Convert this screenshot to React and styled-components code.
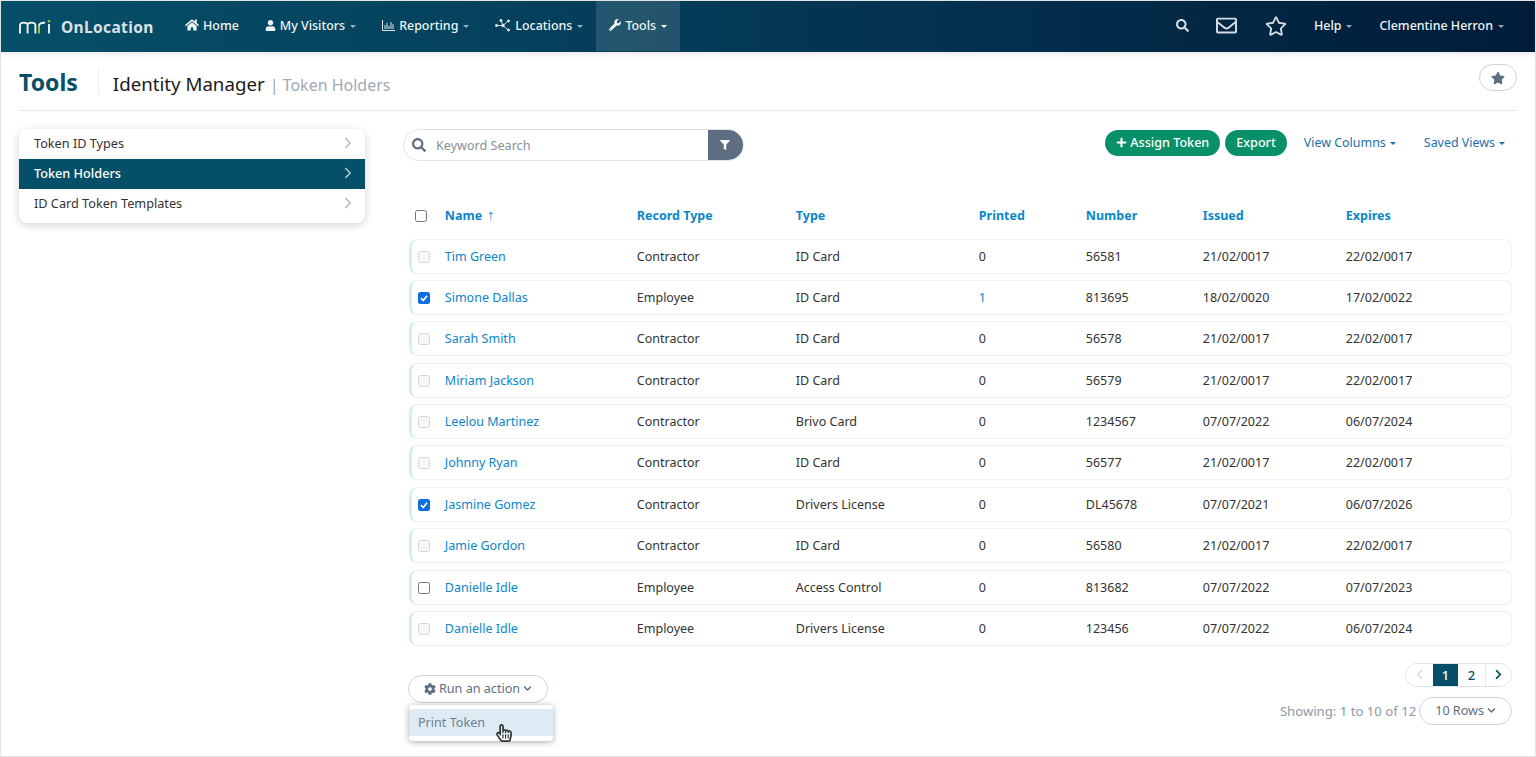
import React from 'react';
import styled, { createGlobalStyle } from 'styled-components';
import { FaHome, FaUser, FaWrench, FaSearch, FaRegEnvelope, FaRegStar, FaStar, FaPlus, FaFilter, FaCog, FaChevronDown, FaChevronLeft, FaChevronRight, FaRegHandPointer } from 'react-icons/fa';
import { LuChevronRight } from 'react-icons/lu';

const Global = createGlobalStyle`
  html, body { margin: 0; padding: 0; background: #fff; }
  * { box-sizing: border-box; }
  body { font-family: "Noto Sans", "Open Sans", sans-serif; color: #333; font-size: 13px; }
`;

const Frame = styled.div`
  width: 1536px; height: 757px; border: 1px solid #e2e4e6; overflow: hidden; display: flex; flex-direction: column; background: #fff;
`;
const Nav = styled.nav`
  height: 51px; flex: none; display: flex; align-items: stretch; color: #fff;
  background: linear-gradient(90deg, #064f68 0%, #04405c 35%, #032c4a 70%, #001c38 100%);
  box-shadow: 0 2px 6px rgba(0,0,0,.1);
`;
const Brand = styled.div`
  width: 171px; padding-left: 18px; display: flex; align-items: center; gap: 9px; flex: none;
`;
const BrandName = styled.span`
  font-size: 15.5px; font-weight: 700; color: #d8e2e8; letter-spacing: .35px;
`;
const NavItem = styled.div`
  display: flex; align-items: center; gap: 4px; height: 50px; padding: 0 13px 2px; font-size: 12.45px; font-weight: 500;
  color: #eef3f5; white-space: nowrap;
  background: ${p => (p.$active ? 'rgba(255,255,255,.13)' : 'transparent')};
  svg { flex: none; }
`;
const Caret = styled.span`
  display: inline-block; width: 0; height: 0; vertical-align: middle; margin-left: ${p => p.$ml ?? 5}px;
  border-left: ${p => p.$half ?? 3}px solid transparent; border-right: ${p => p.$half ?? 3}px solid transparent;
  border-top: 3px solid ${p => p.$color || 'rgba(255,255,255,.6)'};
`;
const NavSpacer = styled.div`flex: 1;`;
const NavIcon = styled.div`
  display: flex; align-items: center; justify-content: center; color: #d5dce1; margin-right: ${p => p.$mr}px;
`;
const NavRight = styled.div`
  display: flex; align-items: center; padding: 0 31px 2px 0;
`;
const NavText = styled.span`
  font-size: 12.45px; font-weight: 500; color: #f0f4f6; white-space: nowrap; margin-left: ${p => p.$ml || 0}px;
`;

const Header = styled.header`
  margin: 0 18px; height: 59px; flex: none; border-bottom: 1px solid #e8eaec; display: flex; align-items: center; position: relative;
`;
const Title = styled.h1`
  margin: 0; font-size: 23px; font-weight: 700; color: #064f68; padding: 1px 20px 0 0; border-right: 1px solid #eceef0; line-height: 26px; height: 26px; display: flex; align-items: center;
`;
const Subtitle = styled.span`
  margin-left: 14px; font-size: 18.7px; color: #1a1a1a; position: relative; top: 2px;
`;
const Crumb = styled.span`
  margin-left: 5px; font-size: 16px; color: #a2a8b4; position: relative; top: 4px;
`;
const FavButton = styled.button`
  position: absolute; right: 0; top: 12px; width: 38px; height: 27px; border-radius: 14px; border: 1px solid #c9d4da; background: #fff;
  display: flex; align-items: center; justify-content: center; color: #5d6e82; padding: 0;
`;

const Body = styled.div`
  flex: 1; display: flex; padding: 18px 23px 0 18px; gap: 38px; min-height: 0;
`;
const Side = styled.aside`
  width: 346px; flex: none; height: 94px; background: #fff; border-radius: 8px; box-shadow: 0 2px 8px rgba(0,0,0,.18); overflow: hidden; display: flex; flex-direction: column; padding-bottom: 5px;
`;
const SideItem = styled.div`
  height: 30px; flex: none; display: flex; align-items: center; justify-content: space-between; padding: 0 8px 2px 15px; font-size: 12.7px;
  color: ${p => (p.$active ? '#fff' : '#333')}; font-weight: ${p => (p.$active ? 500 : 400)};
  background: ${p => (p.$active ? '#064f68' : 'transparent')};
  svg { color: ${p => (p.$active ? '#b9c9d1' : '#b5b9bd')}; }
`;
const Main = styled.main`
  flex: 1; min-width: 0; display: flex; flex-direction: column;
`;
const Toolbar = styled.div`
  display: flex; align-items: flex-start; justify-content: space-between; height: 32px; flex: none; padding-right: 7px;
`;
const Search = styled.div`
  width: 341px; height: 32px; display: flex; align-items: stretch; border: 1px solid #dfe5e7; border-radius: 16px; overflow: hidden; background: #fff;
`;
const SearchIcon = styled.div`
  width: 32px; flex: none; display: flex; align-items: center; justify-content: flex-start; padding-left: 8px; color: #5f6f82;
`;
const SearchInput = styled.div`
  flex: 1; display: flex; align-items: center; color: #8a8f94; font-size: 12.6px;
`;
const FilterBtn = styled.div`
  width: 36px; flex: none; background: #5d6e82; color: #fff; display: flex; align-items: center; justify-content: center; margin: -1px -1px -1px 0; padding-right: 2px;
`;
const Actions = styled.div`display: flex; align-items: center; margin-top: 1px;`;
const GreenBtn = styled.button`
  height: 26px; border: 0; border-radius: 13px; background: #089069; color: #fff; font-family: inherit; font-size: 12.6px; font-weight: 500; padding: 0 11px 1px; margin-right: 5px; display: flex; align-items: center; gap: 3px; white-space: nowrap;
`;
const LinkBtn = styled.span`
  color: #1f6ea8; font-size: 12.45px; white-space: nowrap; margin-left: ${p => p.$ml}px; padding-bottom: 2px;
`;

const cols = '36px 192px 159px 183px 107px 117px 143px 1fr';
const HeadRow = styled.div`
  display: grid; grid-template-columns: ${cols}; align-items: center; height: 30px; margin: 39px 0 0 5.8px; flex: none;
`;
const HeadCell = styled.div`
  font-size: 12.5px; font-weight: 700; color: #0b86c9; white-space: nowrap;
`;
const SortArrow = styled.span`
  font-weight: 400; margin-left: 5px; font-size: 15px; line-height: 12px;
`;
const Box = styled.span`
  display: inline-block; width: 12px; height: 12px; border-radius: 2.5px; flex: none;
  margin: ${p => (p.$head ? '2px 0 0 6.2px' : '1px 0 0 6px')};
  border: 1px solid ${p => (p.$dim ? '#d9d9d9' : '#767676')};
  background: ${p => (p.$dim ? '#f7f7f7' : '#fff')};
`;
const CheckedBox = styled.span`
  width: 12px; height: 12px; border-radius: 2.5px; background: #0b6fe0; margin: 1px 0 0 6px; display: inline-flex; align-items: center; justify-content: center;
`;
const Rows = styled.div`
  display: flex; flex-direction: column; gap: 6.36px; margin: 8.7px 0 0 6px;
`;
const Row = styled.div`
  display: grid; grid-template-columns: ${cols}; align-items: center; height: 35px; border: 1px solid #eef0f1; border-left: 3px solid #d6eef5; border-radius: 8px;
  font-size: 12.5px; color: #333; background: #fff;
`;
const Cell = styled.span`margin-left: -3.2px; white-space: nowrap; color: ${p => p.$link ? '#0b86c9' : '#333'};`;
const Footer = styled.div`
  display: flex; justify-content: space-between; margin-top: 17px; position: relative; padding-left: 5px;
`;
const ActionWrap = styled.div`position: relative; padding-top: 12px;`;
const PillBtn = styled.button`
  height: 28px; border: 1px solid #c9d4da; border-radius: 14px; background: #fff; color: #5d6e82; font-family: inherit; font-size: 12.6px; display: flex; align-items: center; gap: 3px; padding: 0 15px; white-space: nowrap;
`;
const Menu = styled.div`
  position: absolute; left: 1px; top: 42px; width: 144px; height: 36px; background: #fff; border-radius: 4px; box-shadow: 0 1px 6px rgba(0,0,0,.35); padding: 4px 0;
`;
const MenuItem = styled.div`
  height: 27px; background: #dcebf4; color: #6f8090; font-size: 12.6px; display: flex; align-items: center; padding-left: 9px;
`;
const Pointer = styled.div`
  position: absolute; left: 87px; top: 61px; color: #333;
`;
const FooterRight = styled.div`display: flex; flex-direction: column; align-items: flex-end;`;
const Pager = styled.div`
  display: flex; height: 24px; border: 1px solid #dfe4e6; border-radius: 12px; overflow: hidden; background: #fff;
`;
const PageCell = styled.div`
  width: ${p => p.$w}px; display: flex; align-items: center; justify-content: center; font-size: 13px; font-weight: 500;
  color: ${p => (p.$active ? '#fff' : p.$off ? '#d5e0e4' : '#064f68')};
  background: ${p => (p.$active ? '#064f68' : '#fff')};
  border-left: ${p => (p.$sep ? '1px solid #e4e8ea' : '0')};
`;
const ShowRow = styled.div`display: flex; align-items: center; margin-top: 10px;`;
const Showing = styled.span`color: #8a9aa8; font-size: 13.15px; margin-right: 3px;`;

const data = [
  ['Tim Green', 'Contractor', 'ID Card', '0', '56581', '21/02/0017', '22/02/0017', 'dim'],
  ['Simone Dallas', 'Employee', 'ID Card', '1', '813695', '18/02/0020', '17/02/0022', 'on'],
  ['Sarah Smith', 'Contractor', 'ID Card', '0', '56578', '21/02/0017', '22/02/0017', 'dim'],
  ['Miriam Jackson', 'Contractor', 'ID Card', '0', '56579', '21/02/0017', '22/02/0017', 'dim'],
  ['Leelou Martinez', 'Contractor', 'Brivo Card', '0', '1234567', '07/07/2022', '06/07/2024', 'dim'],
  ['Johnny Ryan', 'Contractor', 'ID Card', '0', '56577', '21/02/0017', '22/02/0017', 'dim'],
  ['Jasmine Gomez', 'Contractor', 'Drivers License', '0', 'DL45678', '07/07/2021', '06/07/2026', 'on'],
  ['Jamie Gordon', 'Contractor', 'ID Card', '0', '56580', '21/02/0017', '22/02/0017', 'dim'],
  ['Danielle Idle', 'Employee', 'Access Control', '0', '813682', '07/07/2022', '07/07/2023', 'off'],
  ['Danielle Idle', 'Employee', 'Drivers License', '0', '123456', '07/07/2022', '06/07/2024', 'dim'],
];

const Logo = () => (
  <svg width="33" height="14" viewBox="0 0 33 14" fill="none" strokeWidth="1.9">
    <path d="M1 13.5V5.5C1 1.6 8.6 1.6 8.6 5.5V13.5M8.6 5.5C8.6 1.6 16.4 1.6 16.4 5.5V13.5" stroke="#eef3f5" />
    <path d="M20 13.5V6" stroke="#a9c93a" />
    <path d="M20 6C20 3.5 22.5 2.6 26 2.8" stroke="#eef3f5" />
    <path d="M30 13.5V4" stroke="#eef3f5" />
    <circle cx="30" cy="1.2" r="1.2" fill="#a9c93a" />
  </svg>
);
const ChartIcon = () => (
  <svg width="13" height="11" viewBox="0 0 13 11" fill="none" stroke="#dfe6ea" strokeWidth="1">
    <path d="M.5 0V10.5H13" />
    <path d="M3 9V5M5 9V3M7 9V6M9 9V2M11 9V4" />
  </svg>
);
const NodeIcon = () => (
  <svg width="16" height="13" viewBox="0 0 16 13" fill="#e5ebee" stroke="#e5ebee" strokeWidth=".9">
    <path d="M2 6.5 8 6.5M6 1.5 8 6.5 13 2M8 6.5 13 11" fill="none" />
    <circle cx="1.5" cy="6.5" r="1.1" /><circle cx="6" cy="1.5" r="1.1" /><circle cx="8" cy="6.5" r="1.3" /><circle cx="13.5" cy="2" r="1" /><circle cx="13.5" cy="11" r="1" />
  </svg>
);
const Check = () => (
  <svg width="10" height="10" viewBox="0 0 10 10" fill="none" stroke="#fff" strokeWidth="1.8"><path d="M2 5.2 4.2 7.5 8 2.7" /></svg>
);

export default function App() {
  return (
    <Frame>
      <Global />
      <Nav>
        <Brand><Logo /><BrandName>OnLocation</BrandName></Brand>
        <NavItem><FaHome size={14} /><span>Home</span></NavItem>
        <NavItem><FaUser size={11} /><span>My Visitors<Caret /></span></NavItem>
        <NavItem><ChartIcon /><span>Reporting<Caret /></span></NavItem>
        <NavItem><NodeIcon /><span>Locations<Caret /></span></NavItem>
        <NavItem $active><FaWrench size={12} /><span>Tools<Caret $color="#fff" /></span></NavItem>
        <NavSpacer />
        <NavRight>
          <NavIcon $mr={27}><FaSearch size={13} /></NavIcon>
          <NavIcon $mr={28}><FaRegEnvelope size={21} /></NavIcon>
          <NavIcon $mr={27}><FaRegStar size={22} /></NavIcon>
          <NavText>Help<Caret /></NavText>
          <NavText $ml={27}>Clementine Herron<Caret /></NavText>
        </NavRight>
      </Nav>
      <Header>
        <Title>Tools</Title>
        <Subtitle>Identity Manager</Subtitle>
        <Crumb>| Token Holders</Crumb>
        <FavButton><FaStar size={14} /></FavButton>
      </Header>
      <Body>
        <Side>
          <SideItem>Token ID Types<LuChevronRight size={18} /></SideItem>
          <SideItem $active>Token Holders<LuChevronRight size={18} /></SideItem>
          <SideItem>ID Card Token Templates<LuChevronRight size={18} /></SideItem>
        </Side>
        <Main>
          <Toolbar>
            <Search>
              <SearchIcon><FaSearch size={14} /></SearchIcon>
              <SearchInput>Keyword Search</SearchInput>
              <FilterBtn><FaFilter size={10} /></FilterBtn>
            </Search>
            <Actions>
              <GreenBtn><FaPlus size={11} />Assign Token</GreenBtn>
              <GreenBtn>Export</GreenBtn>
              <LinkBtn $ml={12}>View Columns<Caret $ml={4} $half={3.5} $color="#1f6ea8" /></LinkBtn>
              <LinkBtn $ml={28}>Saved Views<Caret $ml={4} $half={3.5} $color="#1f6ea8" /></LinkBtn>
            </Actions>
          </Toolbar>
          <HeadRow>
            <Box $head />
            <HeadCell>Name<SortArrow>↑</SortArrow></HeadCell>
            <HeadCell>Record Type</HeadCell>
            <HeadCell>Type</HeadCell>
            <HeadCell>Printed</HeadCell>
            <HeadCell>Number</HeadCell>
            <HeadCell>Issued</HeadCell>
            <HeadCell>Expires</HeadCell>
          </HeadRow>
          <Rows>
            {data.map((d, i) => (
              <Row key={i}>
                {d[7] === 'on' ? <CheckedBox><Check /></CheckedBox> : <Box $dim={d[7] === 'dim'} />}
                <Cell $link>{d[0]}</Cell>
                <Cell>{d[1]}</Cell>
                <Cell>{d[2]}</Cell>
                <Cell $link={d[3] === '1'}>{d[3]}</Cell>
                <Cell>{d[4]}</Cell>
                <Cell>{d[5]}</Cell>
                <Cell>{d[6]}</Cell>
              </Row>
            ))}
          </Rows>
          <Footer>
            <ActionWrap>
              <PillBtn><FaCog size={12} />Run an action<FaChevronDown size={9} /></PillBtn>
              <Menu><MenuItem>Print Token</MenuItem></Menu>
              <Pointer><FaRegHandPointer size={18} /></Pointer>
            </ActionWrap>
            <FooterRight>
              <Pager>
                <PageCell $w={27} $off><FaChevronLeft size={11} /></PageCell>
                <PageCell $w={25} $active>1</PageCell>
                <PageCell $w={27}>2</PageCell>
                <PageCell $w={26} $sep><FaChevronRight size={11} /></PageCell>
              </Pager>
              <ShowRow>
                <Showing>Showing: 1 to 10 of 12</Showing>
                <PillBtn>10 Rows<FaChevronDown size={9} /></PillBtn>
              </ShowRow>
            </FooterRight>
          </Footer>
        </Main>
      </Body>
    </Frame>
  );
}
